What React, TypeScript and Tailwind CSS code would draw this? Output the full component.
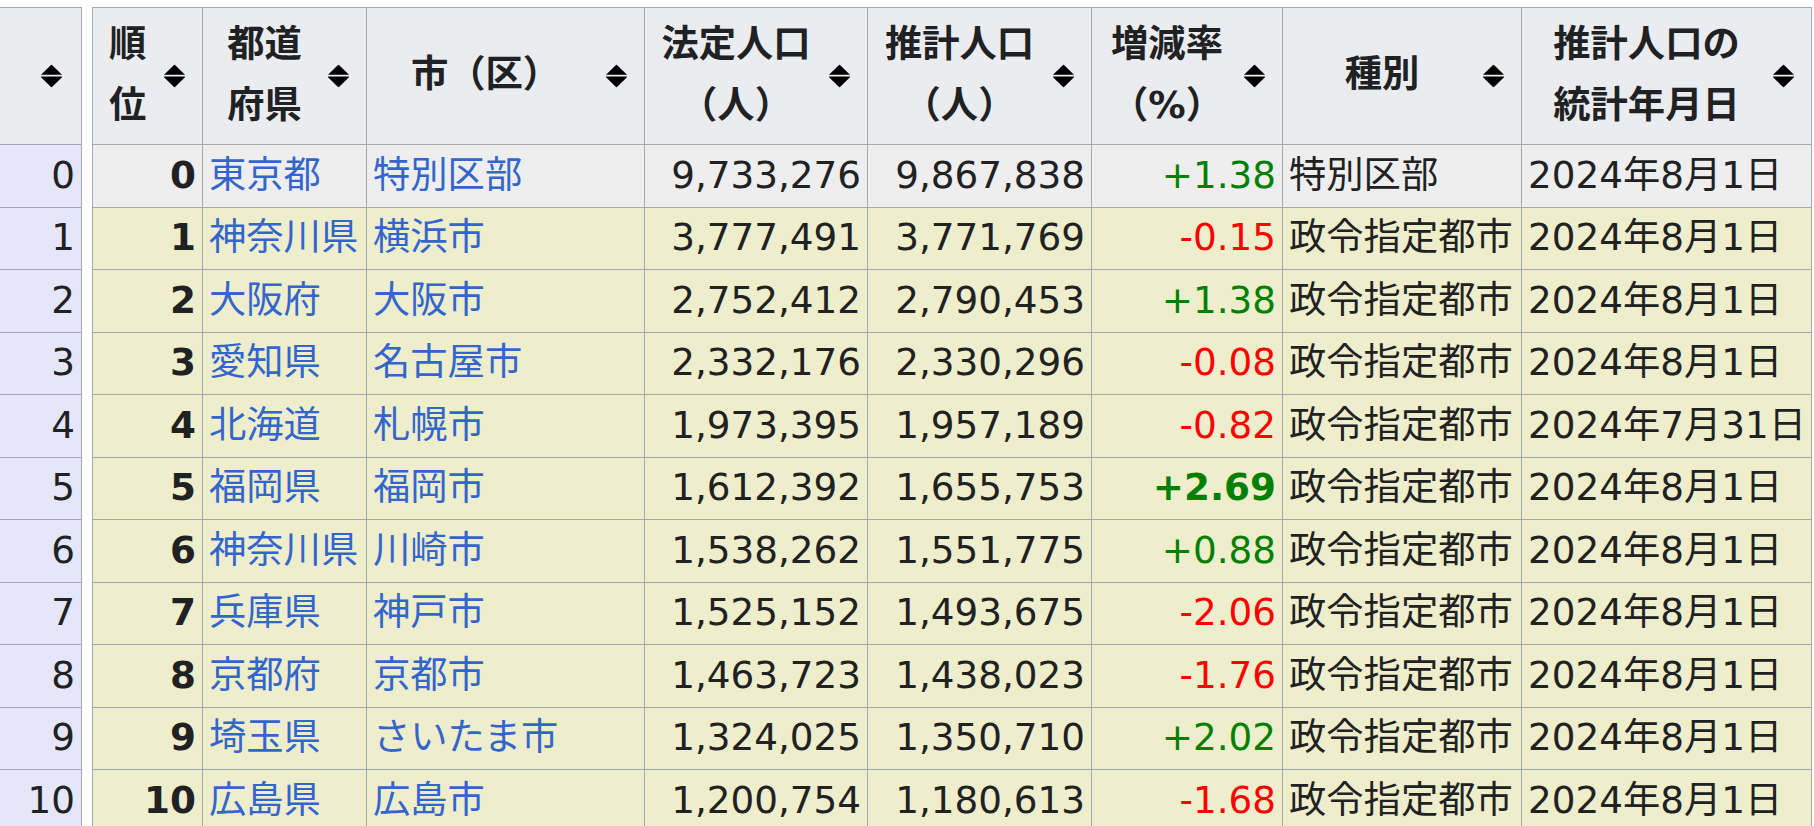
import React from 'react';

type Row = {
  pref: string;
  city: string;
  legal: string;
  est: string;
  rate: string;
  kind: string;
  date: string;
  strong?: boolean;
};

const ROWS: Row[] = [
  { pref: '東京都', city: '特別区部', legal: '9,733,276', est: '9,867,838', rate: '+1.38', kind: '特別区部', date: '2024年8月1日' },
  { pref: '神奈川県', city: '横浜市', legal: '3,777,491', est: '3,771,769', rate: '-0.15', kind: '政令指定都市', date: '2024年8月1日' },
  { pref: '大阪府', city: '大阪市', legal: '2,752,412', est: '2,790,453', rate: '+1.38', kind: '政令指定都市', date: '2024年8月1日' },
  { pref: '愛知県', city: '名古屋市', legal: '2,332,176', est: '2,330,296', rate: '-0.08', kind: '政令指定都市', date: '2024年8月1日' },
  { pref: '北海道', city: '札幌市', legal: '1,973,395', est: '1,957,189', rate: '-0.82', kind: '政令指定都市', date: '2024年7月31日' },
  { pref: '福岡県', city: '福岡市', legal: '1,612,392', est: '1,655,753', rate: '+2.69', kind: '政令指定都市', date: '2024年8月1日', strong: true },
  { pref: '神奈川県', city: '川崎市', legal: '1,538,262', est: '1,551,775', rate: '+0.88', kind: '政令指定都市', date: '2024年8月1日' },
  { pref: '兵庫県', city: '神戸市', legal: '1,525,152', est: '1,493,675', rate: '-2.06', kind: '政令指定都市', date: '2024年8月1日' },
  { pref: '京都府', city: '京都市', legal: '1,463,723', est: '1,438,023', rate: '-1.76', kind: '政令指定都市', date: '2024年8月1日' },
  { pref: '埼玉県', city: 'さいたま市', legal: '1,324,025', est: '1,350,710', rate: '+2.02', kind: '政令指定都市', date: '2024年8月1日' },
  { pref: '広島県', city: '広島市', legal: '1,200,754', est: '1,180,613', rate: '-1.68', kind: '政令指定都市', date: '2024年8月1日' },
];

// widths between border lines, left to right (sum 1719)
const COLS = [110, 164, 278, 223, 224, 191, 239, 290];

function SortIcon({ right = 'right-[17px]' }: { right?: string }) {
  return (
    <svg
      width="21"
      height="23"
      viewBox="0 0 21 23"
      className={`absolute ${right} top-1/2 -translate-y-1/2`}
      fill="#000"
    >
      <path d="M0 10.2 10.5 0 21 10.2Z" />
      <path d="M0 12H21V12.8L10.5 23 0 12.8Z" />
    </svg>
  );
}

const th =
  'relative border border-[#a2a9b1] bg-[#eaecf0] pl-[16px] pr-[56px] py-0 text-center align-middle font-bold leading-[61px]';
const td = 'border border-[#a2a9b1] pl-[6px] pr-[6px] py-0 align-middle whitespace-nowrap';

function Head({ children, arrow }: { children?: React.ReactNode; arrow?: string }) {
  return (
    <th className={th}>
      <div className="pb-[3px]">{children}</div>
      <SortIcon right={arrow} />
    </th>
  );
}

export default function App() {
  return (
    <div className="flex h-[826px] items-start gap-[10px] overflow-hidden bg-white pt-[7px] font-[family-name:DejaVu_Sans,Noto_Sans_CJK_JP,sans-serif] text-[37.3px] text-[#202122]">
      {/* row index */}
      <table className="-ml-[1px] w-[83px] shrink-0 table-fixed border-collapse">
        <colgroup>
          <col className="w-[82px]" />
        </colgroup>
        <thead>
          <tr className="h-[137px]">
            <Head arrow="right-[19px]" />
          </tr>
        </thead>
        <tbody>
          {ROWS.map((_, i) => (
            <tr key={i} className="h-[62.5px]">
              <td className={`${td} bg-[#e6e6fa] text-right`}>{i}</td>
            </tr>
          ))}
        </tbody>
      </table>

      {/* ranking table */}
      <table className="w-[1720px] shrink-0 table-fixed border-collapse">
        <colgroup>
          {COLS.map((w, i) => (
            <col key={i} style={{ width: w }} />
          ))}
        </colgroup>
        <thead>
          <tr className="h-[137px]">
            <Head>順<br />位</Head>
            <Head>都道<br />府県</Head>
            <Head>市（区）</Head>
            <Head>法定人口<br />（人）</Head>
            <Head>推計人口<br />（人）</Head>
            <Head>増減率<br />（%）</Head>
            <Head>種別</Head>
            <Head>推計人口の<br />統計年月日</Head>
          </tr>
        </thead>
        <tbody>
          {ROWS.map((r, i) => (
            <tr key={i} className={`h-[62.5px] ${i === 0 ? 'bg-[#eeeeee]' : 'bg-[#eeeecc]'}`}>
              <td className={`${td} text-right font-bold`}>{i}</td>
              <td className={td}>
                <a className="text-[#3366cc]">{r.pref}</a>
              </td>
              <td className={td}>
                <a className="text-[#3366cc]">{r.city}</a>
              </td>
              <td className={`${td} text-right`}>{r.legal}</td>
              <td className={`${td} text-right`}>{r.est}</td>
              <td
                className={`${td} text-right ${r.rate.startsWith('+') ? 'text-[#008000]' : 'text-[#ff0000]'} ${r.strong ? 'font-bold' : ''}`}
              >
                {r.rate}
              </td>
              <td className={td}>{r.kind}</td>
              <td className={td}>{r.date}</td>
            </tr>
          ))}
        </tbody>
      </table>
    </div>
  );
}
